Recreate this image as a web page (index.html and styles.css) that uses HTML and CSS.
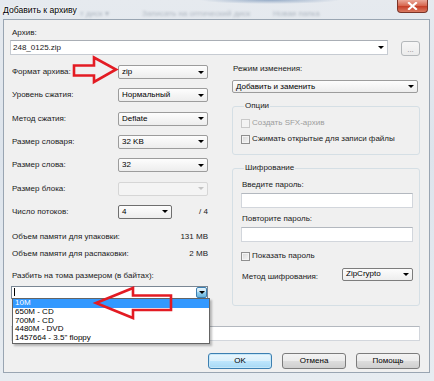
FILE: index.html
```html
<!DOCTYPE html>
<html lang="ru">
<head>
  <meta charset="UTF-8">
  <title>Добавить к архиву</title>
  <link rel="stylesheet" href="styles.css">
</head>
<body>
  <div class="window">
    <div class="titlebar">
      <span class="title">Добавить к архиву</span>
      <span class="behind b1">т диск ▾</span>
      <span class="behind b2">Записать на оптический диск</span>
      <span class="behind b3">Новая папка</span>
      <span class="close">
        <svg width="11" height="8" viewBox="0 0 11 8"><path d="M2 1 L9 7 M9 1 L2 7" stroke="#fff" stroke-width="2.2" stroke-linecap="square"/></svg>
      </span>
    </div>

    <div class="client">
      <div class="label">Архив:</div>
      <div class="archive-row">
        <div class="edit-combo"><span>248_0125.zip</span></div>
        <button class="browse">...</button>
      </div>

      <div class="columns">
        <div class="left">
          <div class="form-grid">
            <span class="label">Формат архива:</span>
            <div class="select">zip</div>
            <span class="label">Уровень сжатия:</span>
            <div class="select">Нормальный</div>
            <span class="label">Метод сжатия:</span>
            <div class="select">Deflate</div>
            <span class="label">Размер словаря:</span>
            <div class="select">32 KB</div>
            <span class="label">Размер слова:</span>
            <div class="select">32</div>
            <span class="label">Размер блока:</span>
            <div class="select disabled"></div>
            <span class="label">Число потоков:</span>
            <div class="threads">
              <div class="select dark">4</div>
              <span>/ 4</span>
            </div>
          </div>

          <div class="mem-row first"><span class="label">Объем памяти для упаковки:</span><span>131 MB</span></div>
          <div class="mem-row"><span class="label">Объем памяти для распаковки:</span><span>2 MB</span></div>

          <div class="label split-label">Разбить на тома размером (в байтах):</div>
          <div class="split-combo">
            <span class="caret"></span>
            <span class="drop-btn"></span>
            <ul class="drop-list">
              <li class="active">10M</li>
              <li>650M - CD</li>
              <li>700M - CD</li>
              <li>4480M - DVD</li>
              <li>1457664 - 3.5" floppy</li>
            </ul>
          </div>
        </div>

        <div class="right">
          <div class="label">Режим изменения:</div>
          <div class="select wide">Добавить и заменить</div>

          <fieldset class="group options">
            <legend>Опции</legend>
            <div class="check off"><span class="box"></span>Создать SFX-архив</div>
            <div class="check"><span class="box"></span>Сжимать открытые для записи файлы</div>
          </fieldset>

          <fieldset class="group crypt">
            <legend>Шифрование</legend>
            <div class="label first">Введите пароль:</div>
            <div class="textbox"></div>
            <div class="label">Повторите пароль:</div>
            <div class="textbox"></div>
            <div class="check show"><span class="box"></span>Показать пароль</div>
            <div class="method-row">
              <span class="label">Метод шифрования:</span>
              <div class="select small">ZipCrypto</div>
            </div>
          </fieldset>
        </div>
      </div>

      <div class="textbox params"></div>

      <div class="buttons">
        <button class="btn default">OK</button>
        <button class="btn">Отмена</button>
        <button class="btn">Помощь</button>
      </div>
    </div>

    <svg class="arrow" width="434" height="381" viewBox="0 0 434 381">
      <polygon points="74,65.5 94,65.5 94,57.5 116,69.5 94,82 94,75.5 74,75.5" />
    </svg>
    <svg class="arrow" width="434" height="381" viewBox="0 0 434 381">
      <polygon points="171,295.5 133,295.5 133,288 96,303 133,318 133,310 171,310" />
    </svg>
  </div>
</body>
</html>
```

FILE: styles.css
```css
* {
  box-sizing: border-box;
}

body {
  margin: 0;
  font-family: "Liberation Sans", Arial, sans-serif;
  font-size: 8px;
  line-height: 10px;
  color: #1a1a1a;
}

.window {
  position: relative;
  width: 434px;
  height: 381px;
  overflow: hidden;
  background: linear-gradient(#e6eaef, #dde4ec 40%, #e7ecf1);
}

.titlebar {
  height: 19px;
  display: flex;
  align-items: center;
  background: radial-gradient(ellipse 70px 4px at 270px 0, rgba(70, 110, 160, 0.5), transparent);
}

.title {
  flex: none;
  width: 80px;
  padding-left: 3px;
  white-space: nowrap;
  font-size: 8.6px;
  color: #000;
  text-shadow: 0 0 3px #fff, 0 0 2px #fff;
}

.behind {
  flex: none;
  margin-top: 8px;
  white-space: nowrap;
  color: #b0b8c2;
  filter: blur(0.8px);
}

.b1 { width: 62px; }
.b2 { width: 131px; }

.close {
  margin-left: auto;
  margin-right: 6px;
  align-self: flex-start;
  width: 31px;
  height: 13px;
  display: flex;
  align-items: center;
  justify-content: center;
  border: 1px solid #7a3327;
  border-top: none;
  border-radius: 0 0 4px 4px;
  background: linear-gradient(#eaa899, #d6634b 50%, #c63e27 52%, #da7a62);
}

.client {
  margin: 0 4px 0 3px;
  height: 354px;
  border: 1px solid #99a5b2;
  background: #f0f0f0;
  padding: 8px 9px 0 7px;
}

.label {
  padding-left: 1px;
}

.archive-row {
  display: flex;
  align-items: flex-start;
  margin-top: 2px;
}

.edit-combo {
  width: 378px;
  height: 15px;
  margin-left: -1px;
  display: flex;
  align-items: center;
  padding: 0 3px 0 2px;
  background: #fff;
  border: 1px solid #c6cbd2;
  border-top-color: #a9aeb5;
}

.edit-combo::after,
.select::after {
  content: "";
  margin-left: auto;
  border-left: 3px solid transparent;
  border-right: 3px solid transparent;
  border-top: 3px solid #000;
}

.browse {
  margin-left: auto;
  margin-top: 1px;
  width: 19px;
  height: 15px;
  padding: 3px 0 0;
  font: inherit;
  font-size: 8px;
  color: #8a8a8a;
  border: 1px solid #b3b7ba;
  border-radius: 3px;
  background: linear-gradient(#f6f6f6, #ececec);
}

.columns {
  display: flex;
  gap: 24px;
  margin-top: 8px;
}

.left {
  width: 197px;
  flex: none;
}

.right {
  width: 188px;
  flex: none;
}

.form-grid {
  display: grid;
  grid-template-columns: 107px 90px;
  grid-auto-rows: 14px;
  row-gap: 9.33px;
  align-items: center;
  margin-top: 1px;
}

.select {
  height: 14px;
  display: flex;
  align-items: center;
  padding: 0 3px 0 3px;
  border: 1px solid #9c9c9c;
  border-radius: 2px;
  background: linear-gradient(#fdfdfd, #ededed);
  color: #000;
}

.select.dark {
  border-color: #6f6f6f;
}

.select.disabled {
  border-color: #d6d6d6;
  background: #f4f4f4;
}

.select.disabled::after {
  border-top-color: #c4c4c4;
}

.threads {
  display: flex;
  align-items: center;
  justify-content: space-between;
}

.threads .select {
  width: 54px;
}

.mem-row {
  display: flex;
  justify-content: space-between;
  margin-top: 7px;
}

.mem-row.first {
  margin-top: 13px;
}

.split-label {
  margin-top: 12px;
}

.split-combo {
  position: relative;
  height: 13px;
  margin-top: 5px;
  display: flex;
  align-items: center;
  background: #fff;
  border: 1px solid #7a8794;
}

.caret {
  width: 1px;
  height: 8px;
  margin-left: 2px;
  background: #000;
}

.drop-btn {
  margin-left: auto;
  width: 11px;
  height: 11px;
  display: flex;
  align-items: center;
  justify-content: center;
  border: 1px solid #3c7fb1;
  border-radius: 2px;
  background: linear-gradient(#e5f4fc, #c4e5f6 50%, #98d1ef 50%, #68b3db);
}

.drop-btn::after {
  content: "";
  border-left: 3px solid transparent;
  border-right: 3px solid transparent;
  border-top: 3px solid #000;
}

.drop-list {
  position: absolute;
  top: 11px;
  left: 0;
  width: 198px;
  margin: 0;
  padding: 0;
  list-style: none;
  background: #fff;
  border: 1px solid #646464;
  box-shadow: 2px 2px 2px rgba(0, 0, 0, 0.25);
  color: #000;
}

.drop-list li {
  height: 8.8px;
  line-height: 8.8px;
  padding-left: 2px;
}

.drop-list li.active {
  background: #3399ff;
  color: #fff;
}

.select.wide {
  margin-top: 6px;
  height: 13px;
  width: 186px;
}

.group {
  margin: 8px 0 0;
  padding: 0 6px 10px 8px;
  border: 1px solid #d5dfe5;
  border-radius: 3px;
}

.group legend {
  padding: 0 1px;
  margin-left: 3px;
  line-height: 10px;
}

.check {
  display: flex;
  align-items: center;
  margin-top: 6px;
}

.options .check:first-of-type {
  margin-top: 7px;
}

.check .box {
  width: 9px;
  height: 9px;
  margin-right: 2px;
  border: 1px solid #8f8f8f;
  background: linear-gradient(135deg, #d6d6d6, #f7f7f7);
  box-shadow: inset 0 0 0 1px #f4f4f4;
}

.check.off {
  color: #9d9d9d;
}

.check.off .box {
  border-color: #c9c9c9;
  background: #f3f3f3;
}

.crypt {
  padding-bottom: 23px;
}

.crypt .label.first {
  margin-top: 7px;
}

.crypt .label {
  margin-top: 6px;
}

.textbox {
  height: 15px;
  margin-top: 3px;
  background: #fff;
  border: 1px solid #d2d6dc;
  border-top-color: #b3b8bf;
}

.check.show {
  margin-top: 9px;
}

.method-row {
  display: flex;
  align-items: center;
  justify-content: space-between;
  margin-top: 5px;
}

.select.small {
  width: 71px;
  height: 13px;
  border-color: #7d7d7d;
}

.textbox.params {
  margin-top: 20px;
}

.buttons {
  display: flex;
  justify-content: flex-end;
  gap: 10px;
  margin-top: 12px;
}

.btn {
  width: 64px;
  height: 16px;
  padding: 0;
  font: inherit;
  font-size: 8px;
  color: #000;
  border: 1px solid #7c7c7c;
  border-radius: 3px;
  background: linear-gradient(#f3f3f3, #ebebeb 50%, #dddddd 50%, #cfcfcf);
}

.btn.default {
  border-color: #3c7fb1;
  background: linear-gradient(#eaf6fd, #d9f0fc 50%, #bee6fd 50%, #a7d9f5);
  box-shadow: inset 0 0 0 1px #c6e7f8;
}

.arrow {
  position: absolute;
  left: 0;
  top: 0;
  pointer-events: none;
}

.arrow polygon {
  fill: none;
  stroke: #e31b23;
  stroke-width: 2.6;
  stroke-linejoin: miter;
}
```
